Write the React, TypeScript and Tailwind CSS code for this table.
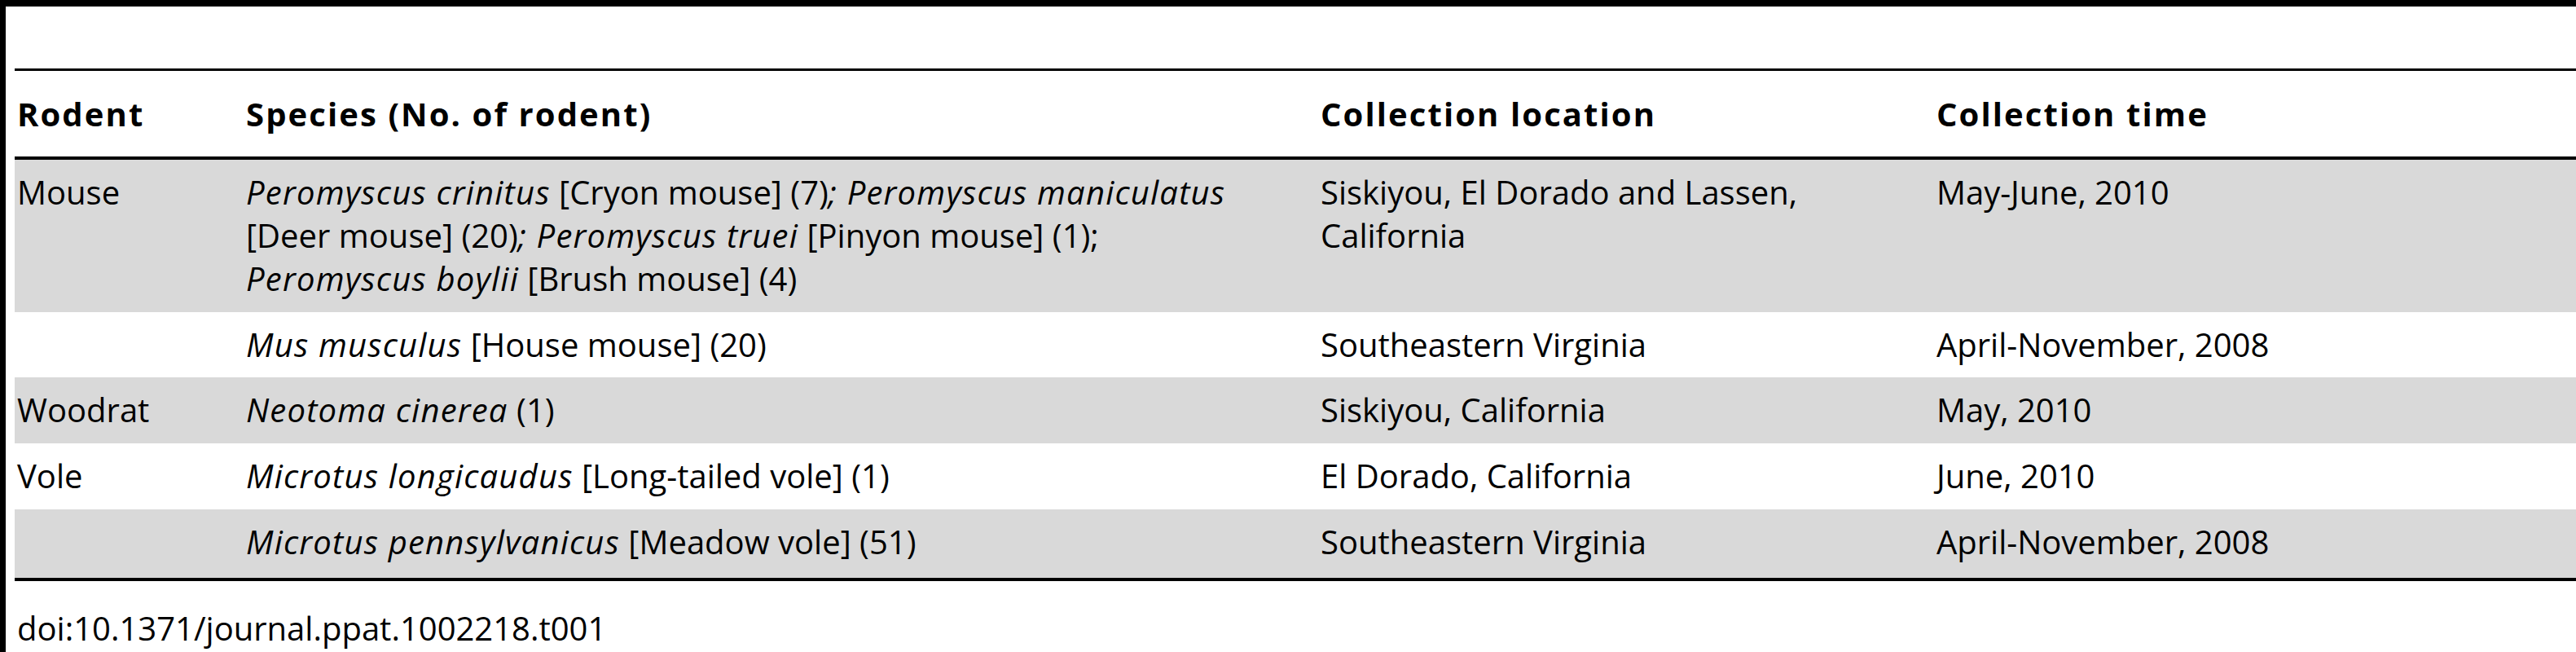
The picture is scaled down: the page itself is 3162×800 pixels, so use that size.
import React from 'react'

type Row = {
  rodent: string
  species: React.ReactNode
  location: React.ReactNode
  time: string
  shade: boolean
  height: string
}

const I = ({ children }: { children: React.ReactNode }) => (
  <i className="tracking-[1.2px]">{children}</i>
)

const rows: Row[] = [
  {
    rodent: 'Mouse',
    species: (
      <>
        <I>Peromyscus crinitus</I> [Cryon mouse] (7)<I>; Peromyscus maniculatus</I>
        <br />
        [Deer mouse] (20)<I>; Peromyscus truei</I> [Pinyon mouse] (1);
        <br />
        <I>Peromyscus boylii</I> [Brush mouse] (4)
      </>
    ),
    location: (
      <>
        Siskiyou, El Dorado and Lassen,
        <br />
        California
      </>
    ),
    time: 'May-June, 2010',
    shade: true,
    height: 'h-[187px]',
  },
  {
    rodent: '',
    species: (
      <>
        <I>Mus musculus</I> [House mouse] (20)
      </>
    ),
    location: 'Southeastern Virginia',
    time: 'April-November, 2008',
    shade: false,
    height: 'h-[80px]',
  },
  {
    rodent: 'Woodrat',
    species: (
      <>
        <I>Neotoma cinerea</I> (1)
      </>
    ),
    location: 'Siskiyou, California',
    time: 'May, 2010',
    shade: true,
    height: 'h-[81px]',
  },
  {
    rodent: 'Vole',
    species: (
      <>
        <I>Microtus longicaudus</I> [Long-tailed vole] (1)
      </>
    ),
    location: 'El Dorado, California',
    time: 'June, 2010',
    shade: false,
    height: 'h-[81px]',
  },
  {
    rodent: '',
    species: (
      <>
        <I>Microtus pennsylvanicus</I> [Meadow vole] (51)
      </>
    ),
    location: 'Southeastern Virginia',
    time: 'April-November, 2008',
    shade: true,
    height: 'h-[84px]',
  },
]

const cols = 'grid grid-cols-[281px_1319px_756px_1fr]'

export default function App() {
  return (
    <div className="h-[800px] w-[3162px] overflow-hidden border-l-[7px] border-t-[8px] border-black bg-white font-['Open_Sans',sans-serif] text-[40px] leading-[53px] text-black">
      <div className="pl-[11px] pt-[76px]">
        <div className={`${cols} border-t-[3px] border-b-[4px] border-black pt-[26px] pb-[26px] font-bold tracking-[2.1px]`}>
          <div className="pl-[3px]">Rodent</div>
          <div className="pl-[3px]">Species (No. of rodent)</div>
          <div className="pl-[3px]">Collection location</div>
          <div className="pl-[3px]">Collection time</div>
        </div>

        {rows.map((row, i) => (
          <div
            key={i}
            className={`${cols} ${row.height} pt-[13px] ${row.shade ? 'bg-[#d9d9d9]' : 'bg-white'}`}
          >
            <div className="pl-[3px]">{row.rodent}</div>
            <div className="pl-[3px]">{row.species}</div>
            <div className="pl-[3px]">{row.location}</div>
            <div className="pl-[3px]">{row.time}</div>
          </div>
        ))}

        <div className="border-t-[4px] border-black pt-[31px] pl-[3px]">
          doi:10.1371/journal.ppat.1002218.t001
        </div>
      </div>
    </div>
  )
}
